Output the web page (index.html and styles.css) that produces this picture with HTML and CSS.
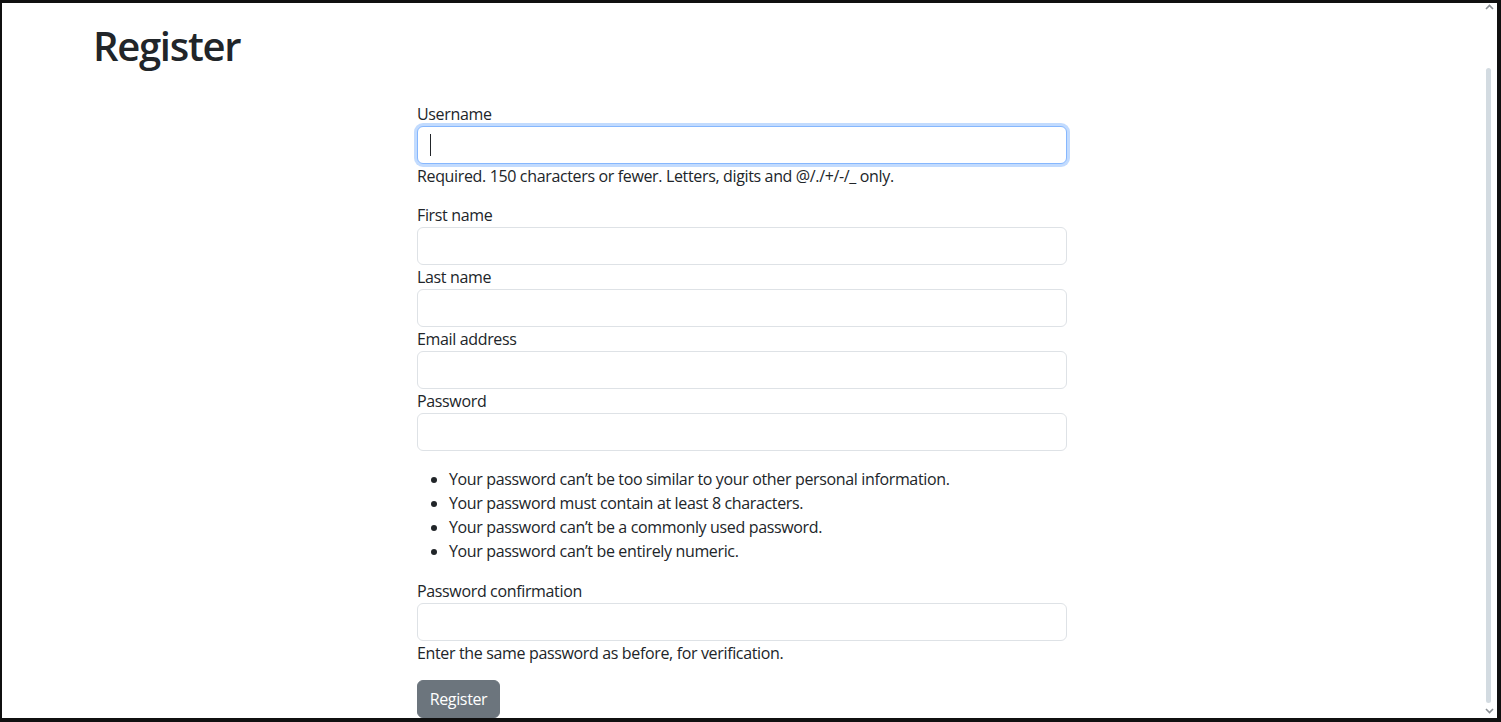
FILE: index.html
```html
<!DOCTYPE html>
<html lang="en">
<head>
<meta charset="utf-8">
<title>Register</title>
<link rel="stylesheet" href="styles.css">
</head>
<body>
<div class="frame">
  <div class="page">
    <h1 class="title">Register</h1>
    <form class="form">
      <label class="label" for="username">Username</label>
      <div class="field-wrap">
        <input class="control control-focus" id="username" type="text">
        <span class="caret"></span>
      </div>
      <div class="help">Required. 150 characters or fewer. Letters, digits and @/./+/-/_ only.</div>
      <div class="spacer"></div>
      <label class="label" for="first">First name</label>
      <input class="control" id="first" type="text">
      <label class="label" for="last">Last name</label>
      <input class="control" id="last" type="text">
      <label class="label" for="email">Email address</label>
      <input class="control" id="email" type="email">
      <label class="label" for="pw1">Password</label>
      <input class="control" id="pw1" type="password">
      <ul class="rules">
        <li>Your password can’t be too similar to your other personal information.</li>
        <li>Your password must contain at least 8 characters.</li>
        <li>Your password can’t be a commonly used password.</li>
        <li>Your password can’t be entirely numeric.</li>
      </ul>
      <label class="label" for="pw2">Password confirmation</label>
      <input class="control" id="pw2" type="password">
      <div class="help">Enter the same password as before, for verification.</div>
      <div class="spacer"></div>
      <button class="btn" type="button">Register</button>
    </form>
    <div class="scrollbar">
      <svg class="arrow arrow-up" width="9" height="6" viewBox="0 0 9 6"><path d="M1 5 L4.5 1.5 L8 5" fill="none" stroke="#8a8f94" stroke-width="1.6"/></svg>
      <div class="thumb"></div>
      <svg class="arrow arrow-down" width="9" height="6" viewBox="0 0 9 6"><path d="M1 1 L4.5 4.5 L8 1" fill="none" stroke="#8a8f94" stroke-width="1.6"/></svg>
    </div>
  </div>
</div>
</body>
</html>
```

FILE: styles.css
```css
* { box-sizing: border-box; }
html, body { margin: 0; padding: 0; }
body {
  background: #101010;
  font-family: "Open Sans", "Noto Sans", sans-serif;
  color: #212529;
  font-size: 16px;
  line-height: 24px;
  letter-spacing: -0.35px;
}
.frame {
  width: 1501px;
  height: 722px;
  padding: 3px 4px 4px 2px;
  background: #101010;
}
.page {
  position: relative;
  background: #fff;
  height: 715px;
  overflow: hidden;
  padding: 19px 0 0 91px;
}
.title {
  margin: 0;
  font-size: 40px;
  line-height: 48px;
  font-weight: 600;
  letter-spacing: -1.3px;
  color: #212529;
}
.form {
  width: 650px;
  margin: 32px 0 0 324px;
  display: flex;
  flex-direction: column;
}
.label {
  display: block;
  height: 24px;
}
.field-wrap { position: relative; }
.control {
  display: block;
  width: 100%;
  height: 38px;
  padding: 6px 12px;
  font: inherit;
  letter-spacing: inherit;
  color: #212529;
  background: #fff;
  border: 1px solid #dee2e6;
  border-radius: 6px;
  outline: none;
}
.control-focus {
  border-color: #86b7fe;
  box-shadow: 0 0 0 3px rgba(13, 110, 253, 0.25);
}
.caret {
  position: absolute;
  left: 13px;
  top: 8px;
  width: 1px;
  height: 22px;
  background: #212529;
}
.help { height: 24px; }
.spacer { height: 15px; }
.rules {
  margin: 16px 0;
  padding-left: 32px;
}
.btn {
  align-self: flex-start;
  width: 83px;
  height: 38px;
  padding: 6px 0;
  font: inherit;
  letter-spacing: inherit;
  text-align: center;
  color: #fff;
  background: #6c757d;
  border: 1px solid #6c757d;
  border-radius: 6px;
}
.scrollbar {
  position: absolute;
  top: 0;
  right: 0;
  width: 12px;
  height: 715px;
}
.arrow { position: absolute; left: 0; }
.arrow-up { top: 1px; }
.arrow-down { top: 705px; }
.thumb {
  position: absolute;
  left: 1px;
  top: 65px;
  width: 5px;
  height: 635px;
  border-radius: 3px;
  background: #d3dbe1;
}
```
